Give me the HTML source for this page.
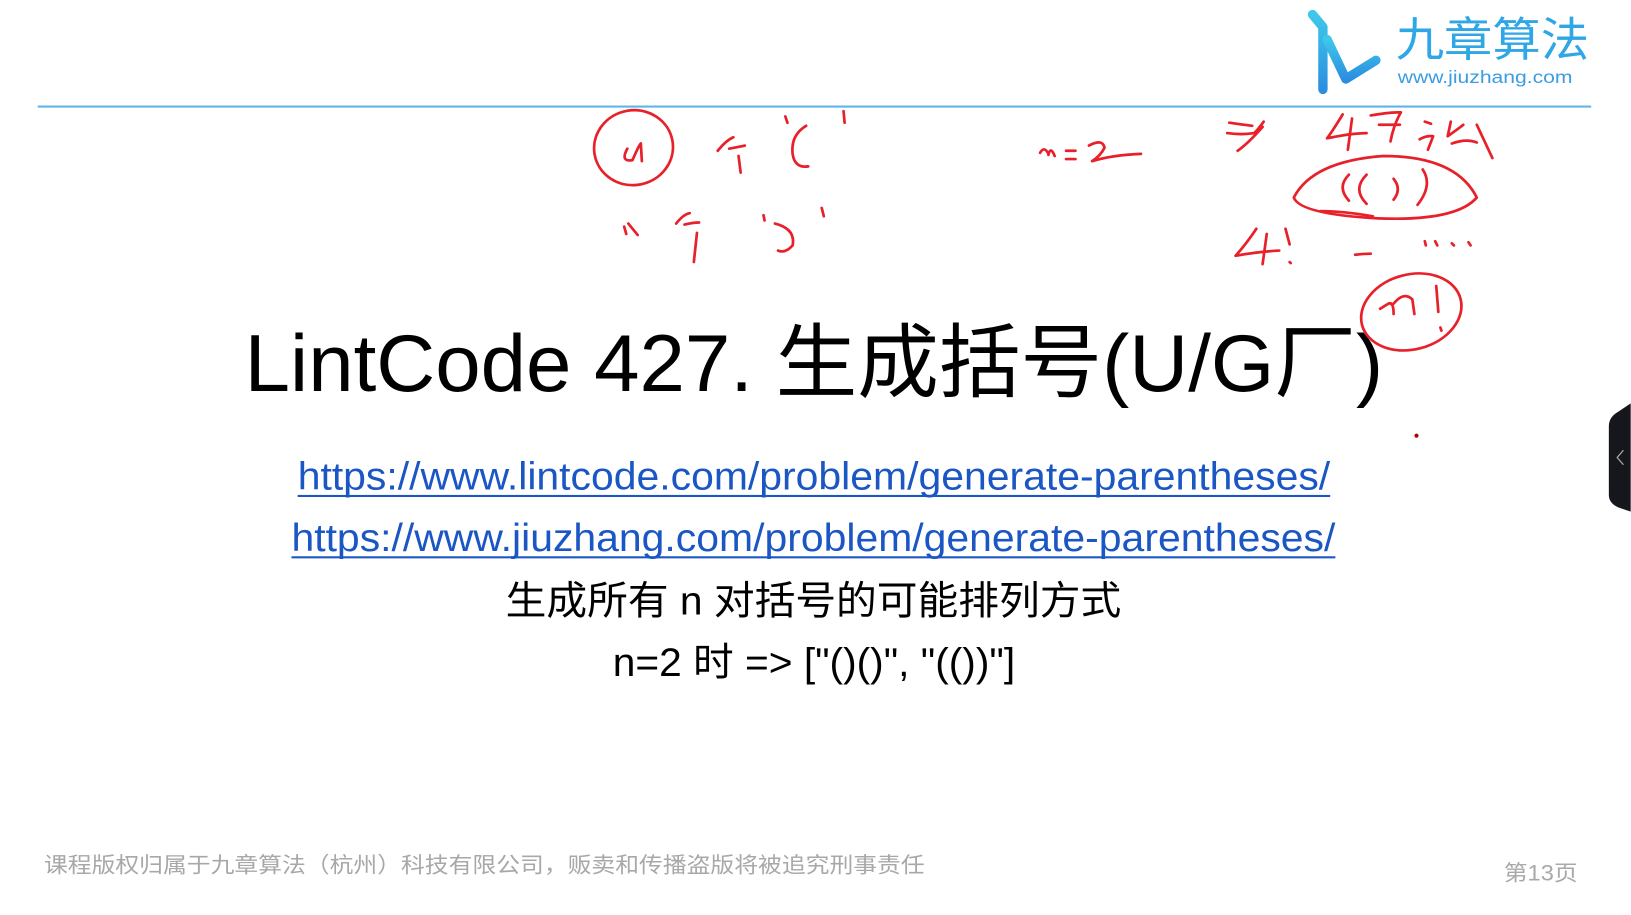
<!DOCTYPE html>
<html><head><meta charset="utf-8"><style>
html,body{margin:0;padding:0;background:#fff;overflow:hidden}
svg{display:block}
</style></head><body>
<svg width="1631" height="915" viewBox="0 0 1568 880" xmlns="http://www.w3.org/2000/svg">
<rect width="1568" height="880" fill="#fff"/>
<defs><linearGradient id="g" x1="0" y1="0" x2="0" y2="1"><stop offset="0" stop-color="#3fc7ea"/><stop offset="1" stop-color="#2b8fe0"/></linearGradient></defs>
<g fill="none" stroke="url(#g)" stroke-width="9" stroke-linecap="round" stroke-linejoin="round">
<path d="M1262 14 L1272 26 L1272 86"/>
<path d="M1276 38 L1294 76 L1323 58"/>
</g>
<text x="1342" y="54" textLength="186" lengthAdjust="spacingAndGlyphs" font-family="'Liberation Sans','Noto Sans CJK SC',sans-serif" font-size="45" fill="#2fa6e6">九章算法</text>
<text x="1344" y="80" textLength="168" lengthAdjust="spacingAndGlyphs" font-family="'Liberation Sans',sans-serif" font-size="17" fill="#3a9de2">www.jiuzhang.com</text>
<rect x="36" y="101.5" width="1494" height="2" fill="#5cb5e6"/>
<text x="235" y="376" textLength="1095" lengthAdjust="spacingAndGlyphs" font-family="'Liberation Sans','Noto Sans CJK SC',sans-serif" font-size="78" fill="#000">LintCode 427. 生成括号(U/G厂)</text>
<g font-family="'Liberation Sans',sans-serif" font-size="37" fill="#1a56c4">
<text x="286" y="471" textLength="993" lengthAdjust="spacingAndGlyphs">https://www.lintcode.com/problem/generate-parentheses/</text>
<text x="280" y="530" textLength="1004" lengthAdjust="spacingAndGlyphs">https://www.jiuzhang.com/problem/generate-parentheses/</text>
</g>
<rect x="286" y="476" width="993" height="2" fill="#1a56c4"/>
<rect x="280" y="535" width="1004" height="2" fill="#1a56c4"/>
<text x="486" y="591" textLength="592" lengthAdjust="spacingAndGlyphs" font-family="'Liberation Sans','Noto Sans CJK SC',sans-serif" font-size="38" fill="#000">生成所有 n 对括号的可能排列方式</text>
<text x="589" y="650" textLength="387" lengthAdjust="spacingAndGlyphs" font-family="'Liberation Sans','Noto Sans CJK SC',sans-serif" font-size="38" fill="#000">n=2 时 =&gt; ["()()", "(())"]</text>
<text x="42" y="839" textLength="847" lengthAdjust="spacingAndGlyphs" font-family="'Liberation Sans','Noto Sans CJK SC',sans-serif" font-size="21" fill="#a8a8a8">课程版权归属于九章算法（杭州）科技有限公司，贩卖和传播盗版将被追究刑事责任</text>
<text x="1446" y="847" textLength="71" lengthAdjust="spacingAndGlyphs" font-family="'Liberation Sans','Noto Sans CJK SC',sans-serif" font-size="21" fill="#a8a8a8">第13页</text>
<path d="M1568 388 L1556 396 Q1547 401 1547 410 L1547 476 Q1547 484 1556 488 L1568 492 Z" fill="#16171c"/>
<path d="M1561 433 L1555 440 L1561 447" stroke="#aaa" stroke-width="1.2" fill="none"/>
<g fill="none" stroke="#e8202a" stroke-width="2.6" stroke-linecap="round" stroke-linejoin="round">
<ellipse cx="609" cy="142" rx="38" ry="36" transform="rotate(-10 609 142)"/>
<path d="M603 143 Q596 156 608 154 Q614 140 616 138 L617 155"/>
<path d="M690 145 Q698 135 705 132 M701 143 Q712 141 716 140 M710 150 L712 166"/>
<path d="M775 121 Q760 130 762 148 Q764 162 777 160"/>
<path d="M755 112 L757 118 M811 107 L812 118"/>
<path d="M600 218 L602 225 M604 215 Q608 220 613 226"/>
<path d="M650 215 Q657 206 663 205 M658 216 Q666 214 672 214 M670 224 L667 252"/>
<path d="M734 207 L735 212 M745 215 Q765 220 762 236 Q755 244 748 241 M790 200 L792 208"/>
<path d="M1000 147 Q1004 140 1008 148 M1008 149 Q1010 140 1014 150"/>
<path d="M1025 145 L1034 145 M1025 153 L1034 153"/>
<path d="M1047 140 Q1060 133 1062 142 Q1058 150 1050 155 Q1070 149 1097 148"/>
<path d="M1182 118 Q1196 120 1204 121 M1180 128 Q1194 130 1206 128 Q1210 124 1215 117 M1214 122 Q1200 138 1190 145"/>
<path d="M1291 110 Q1282 125 1276 133 Q1300 128 1314 128 M1300 114 L1296 144"/>
<path d="M1318 111 Q1335 108 1347 108 Q1340 120 1337 136 M1326 120 L1346 120"/>
<path d="M1370 117 L1376 119 M1365 134 Q1372 130 1378 131 L1373 144 M1395 117 L1392 131 Q1402 124 1407 120 M1396 138 Q1410 133 1420 137 M1420 120 L1435 152"/>
<path d="M1244 190 Q1262 155 1330 150 Q1400 150 1420 190 Q1400 213 1325 210 Q1250 206 1244 190 Z"/>
<path d="M1297 168 Q1285 180 1297 193 M1314 168 Q1300 182 1314 196 M1340 172 Q1348 182 1340 192 M1368 163 Q1378 178 1363 197"/>
<path d="M1270 203 Q1290 203 1320 208"/>
<path d="M1208 220 Q1198 235 1188 246 Q1210 242 1230 241 M1218 225 L1214 254 M1236 220 L1240 235 M1240 252 L1241 253"/>
<path d="M1303 245 Q1312 244 1318 244 M1370 232 L1371 236 M1380 232 L1382 236 M1396 234 L1398 236 M1412 233 L1414 236"/>
<ellipse cx="1357" cy="300" rx="49" ry="36" transform="rotate(-15 1357 300)"/>
<path d="M1327 297 L1335 292 Q1340 290 1340 302 M1340 292 Q1350 280 1358 288 L1360 302 M1381 275 L1383 300 M1385 315 L1386 318"/>
</g>
<circle cx="1362" cy="419" r="2" fill="#a00"/>
</svg>
</body></html>
